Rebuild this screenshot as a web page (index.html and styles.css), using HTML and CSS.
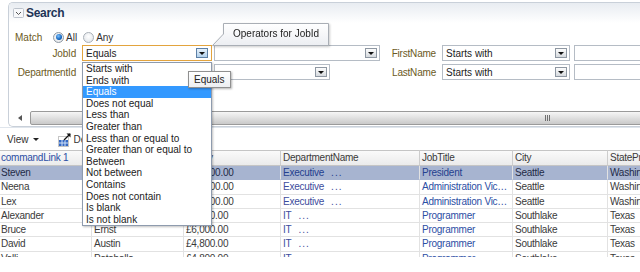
FILE: index.html
```html
<!DOCTYPE html>
<html lang="en">

<head>
    <meta charset="UTF-8">
    <title>Search</title>
    <link rel="stylesheet" href="styles.css">
</head>

<body>
    <div class="page">
        <div class="panel">
            <div class="panel-head">
                <svg class="disclose" width="11" height="10" viewBox="0 0 11 10">
                    <rect x="0.5" y="0.5" width="10" height="9" rx="1" fill="#f7f8fa" stroke="#bcc3cc"/>
                    <path d="M3 4 L5.5 6.5 L8 4" fill="none" stroke="#555" stroke-width="1"/>
                </svg>
                <span class="title">Search</span>
            </div>
            <div class="criteria">
                <div class="match-row">
                    <span class="lbl match-lbl">Match</span>
                    <span class="radio on"></span><span class="opt">All</span>
                    <span class="radio second"></span><span class="opt">Any</span>
                </div>
                <div class="crit-grid">
                    <span class="lbl rlbl">JobId</span>
                    <div class="sel focus w130"><span>Equals</span><i class="btn"></i></div>
                    <div class="sel w166"><span></span><i class="btn"></i></div>
                    <span class="lbl rlbl">FirstName</span>
                    <div class="sel w128"><span>Starts with</span><i class="btn"></i></div>
                    <div class="sel inp"></div>

                    <span class="lbl rlbl">DepartmentId</span>
                    <div class="sel w130"><span>Equals</span><i class="btn"></i></div>
                    <div class="sel w116"><span></span><i class="btn"></i></div>
                    <span class="lbl rlbl">LastName</span>
                    <div class="sel w128"><span>Starts with</span><i class="btn"></i></div>
                    <div class="sel inp"></div>
                </div>
            </div>
            <div class="hscroll">
                <span class="hs-arrow"></span>
                <div class="hs-thumb"><span class="grip"></span></div>
            </div>
        </div>

        <div class="toolbar">
            <span class="view">View</span><span class="caret"></span>
            <svg class="detach" width="15" height="15" viewBox="0 0 15 15">
                <rect x="1.5" y="4.5" width="10" height="10" fill="none" stroke="#8a8a8a" stroke-dasharray="1 1"/>
                <rect x="2" y="8" width="9" height="6" fill="#3569c4"/>
                <path d="M5 8 V14 M8 8 V14 M2 11 H11" stroke="#cfe0f7" stroke-width="1"/>
                <path d="M7 8 L13 2" stroke="#111" stroke-width="1.3"/>
                <path d="M9.5 1.5 H13.5 V5.5 Z" fill="#111"/>
            </svg>
            <span class="tb-text">Detach</span>
        </div>

        <div class="grid-wrap">
            <table class="grid">
                <thead>
                    <tr>
                        <th class="c1 lnk">commandLink 1</th>
                        <th class="c2">LastName</th>
                        <th class="c3">Salary</th>
                        <th class="c4">DepartmentName</th>
                        <th class="c5">JobTitle</th>
                        <th class="c6">City</th>
                        <th class="c7">StateProvince</th>
                    </tr>
                </thead>
                <tbody>
                    <tr class="selected">
                        <td class="c1">Steven</td><td>King</td><td>£24,000.00</td>
                        <td class="dept">Executive<span class="dots">...</span></td>
                        <td class="lnk">President</td><td>Seattle</td><td>Washington</td>
                    </tr>
                    <tr>
                        <td class="c1">Neena</td><td>Kochhar</td><td>£17,000.00</td>
                        <td class="dept">Executive<span class="dots">...</span></td>
                        <td class="lnk">Administration Vice President</td><td>Seattle</td><td>Washington</td>
                    </tr>
                    <tr>
                        <td class="c1">Lex</td><td>De Haan</td><td>£17,000.00</td>
                        <td class="dept">Executive<span class="dots">...</span></td>
                        <td class="lnk">Administration Vice President</td><td>Seattle</td><td>Washington</td>
                    </tr>
                    <tr>
                        <td class="c1">Alexander</td><td>Hunold</td><td>£9,000.00</td>
                        <td class="dept">IT<span class="dots">...</span></td>
                        <td class="lnk">Programmer</td><td>Southlake</td><td>Texas</td>
                    </tr>
                    <tr>
                        <td class="c1">Bruce</td><td>Ernst</td><td>£6,000.00</td>
                        <td class="dept">IT<span class="dots">...</span></td>
                        <td class="lnk">Programmer</td><td>Southlake</td><td>Texas</td>
                    </tr>
                    <tr>
                        <td class="c1">David</td><td>Austin</td><td>£4,800.00</td>
                        <td class="dept">IT<span class="dots">...</span></td>
                        <td class="lnk">Programmer</td><td>Southlake</td><td>Texas</td>
                    </tr>
                    <tr>
                        <td class="c1">Valli</td><td>Pataballa</td><td>£4,800.00</td>
                        <td class="dept">IT<span class="dots">...</span></td>
                        <td class="lnk">Programmer</td><td>Southlake</td><td>Texas</td>
                    </tr>
                </tbody>
            </table>
        </div>

        <!-- operator list, open under JobId -->
        <ul class="ddlist">
            <li>Starts with</li>
            <li>Ends with</li>
            <li class="hl">Equals</li>
            <li>Does not equal</li>
            <li>Less than</li>
            <li>Greater than</li>
            <li>Less than or equal to</li>
            <li>Greater than or equal to</li>
            <li>Between</li>
            <li>Not between</li>
            <li>Contains</li>
            <li>Does not contain</li>
            <li>Is blank</li>
            <li>Is not blank</li>
        </ul>

        <div class="tip-eq">Equals</div>

        <div class="tip-op">
            <svg class="tip-shape" width="120" height="28" viewBox="0 0 120 28">
                <defs>
                    <linearGradient id="tipbg" x1="0" y1="0" x2="0" y2="1">
                        <stop offset="0" stop-color="#ffffff"/>
                        <stop offset="1" stop-color="#eceef2"/>
                    </linearGradient>
                </defs>
                <path d="M12.5 1.5 H117.5 V23.5 H1.5 L12.5 12 Z" fill="url(#tipbg)" stroke="#a9aeb5"/>
            </svg>
            <span class="tip-text">Operators for JobId</span>
        </div>
    </div>
</body>

</html>
```

FILE: styles.css
```css
* {
    margin: 0;
    padding: 0;
    box-sizing: border-box;
}

body {
    font: 10px "Liberation Sans", Arial, sans-serif;
    color: #333;
    background: #fff;
}

.page {
    position: relative;
    width: 640px;
    height: 272px;
    overflow: hidden;
}

/* search panel */
.panel {
    margin: 2px 0 0 8px;
    width: 700px;
    height: 125px;
    border: 1px solid #c9d0d9;
    border-right: none;
    border-radius: 5px 0 0 5px;
    display: flex;
    flex-direction: column;
}

.panel-head {
    height: 20px;
    display: flex;
    align-items: center;
    padding-left: 4px;
    background: linear-gradient(#e8ecf1, #fff);
    border-radius: 4px 0 0 0;
}

.title {
    margin-left: 2px;
    font-size: 12px;
    font-weight: bold;
    letter-spacing: -0.3px;
    color: #1d3456;
}

.criteria {
    padding-top: 8px;
}

.lbl {
    color: #6c5a24;
    white-space: nowrap;
}

.match-row {
    display: flex;
    align-items: center;
    height: 12px;
    padding-left: 6px;
    margin-bottom: 2px;
}

.match-lbl {
    width: 38px;
}

.radio {
    width: 11px;
    height: 11px;
    border-radius: 50%;
    border: 1px solid #8f99a4;
    background: radial-gradient(circle at 50% 40%, #fff, #dde1e6);
    display: flex;
    align-items: center;
    justify-content: center;
}

.radio.on::after {
    content: "";
    width: 6px;
    height: 6px;
    border-radius: 50%;
    background: radial-gradient(circle at 40% 35%, #7cc0ff, #0d5fb8 65%, #08407f);
}

.radio.second {
    margin-left: 6px;
    border-color: #a9b0b8;
}

.opt {
    margin-left: 2px;
    color: #333;
}

.crit-grid {
    display: grid;
    grid-template-columns: 73px 132px 166px 62px 132px 1fr;
    grid-auto-rows: 16px;
    row-gap: 3px;
    align-items: center;
}

.rlbl {
    text-align: right;
    padding-right: 6px;
    letter-spacing: -0.2px;
}

.sel {
    height: 16px;
    display: flex;
    align-items: center;
    justify-content: space-between;
    padding-left: 3px;
    border: 1px solid #b5bcc5;
    background: #fff;
    color: #222;
}

.sel.focus {
    border-color: #e3a43e;
}

.w130 { width: 130px; }
.w166 { width: 166px; }
.w116 { width: 116px; }
.w128 { width: 128px; }
.inp { width: 100%; }

.btn {
    width: 12px;
    height: 10px;
    margin-right: 2px;
    border: 1px solid #8e97a2;
    background: linear-gradient(#fdfdfd, #d6dade);
    display: flex;
    align-items: center;
    justify-content: center;
}

.focus .btn {
    margin-right: 3px;
    border-color: #5d80a6;
    background: linear-gradient(#e6f1fb, #b3d1ec);
}

.btn::after {
    content: "";
    border-top: 3px solid #111;
    border-left: 3px solid transparent;
    border-right: 3px solid transparent;
}

.hscroll {
    margin-top: auto;
    margin-bottom: 1px;
    height: 14px;
    display: flex;
}

.hs-arrow {
    width: 21px;
    display: flex;
    align-items: center;
    justify-content: center;
}

.hs-arrow::after {
    content: "";
    border-right: 4px solid #555;
    border-top: 3px solid transparent;
    border-bottom: 3px solid transparent;
}

.hs-thumb {
    flex: 1;
    display: flex;
    align-items: center;
    padding-left: 514px;
    border: 1px solid #9a9a9a;
    border-radius: 2px;
    background: linear-gradient(#f6f6f6, #e2e2e2 45%, #c9c9c9);
}

.grip {
    width: 5px;
    height: 6px;
    background: repeating-linear-gradient(90deg, #6f6f6f 0 1px, transparent 1px 2px);
}

/* toolbar */
.toolbar {
    height: 23px;
    border-top: 1px solid #dfe5ec;
    display: flex;
    align-items: center;
    padding-left: 7px;
}

.view {
    color: #333;
}

.caret {
    margin-left: 4px;
    border-top: 3px solid #222;
    border-left: 3px solid transparent;
    border-right: 3px solid transparent;
}

.detach {
    margin-left: 18px;
}

.tb-text {
    margin-left: 2px;
}

/* table */
.grid-wrap {
    height: 107px;
    overflow: hidden;
}

.grid {
    width: 708px;
    table-layout: fixed;
    border-collapse: separate;
    border-spacing: 0;
    letter-spacing: -0.25px;
}

.grid th,
.grid td {
    padding: 0 2px;
    white-space: nowrap;
    overflow: hidden;
    text-overflow: ellipsis;
    text-align: left;
    font-weight: normal;
}

.grid th {
    line-height: 14px;
    border-top: 1px solid #c5c5c5;
    border-bottom: 1px solid #c5c5c5;
    border-right: 1px solid #cdcdcd;
    background: linear-gradient(#fafafa, #ebebeb);
    color: #3a3a3a;
}

.grid td {
    line-height: 13.3px;
    border-bottom: 1px solid #e2e2e2;
    border-right: 1px solid #e2e2e2;
    color: #3a3a3a;
}

.grid .c1 { padding-left: 1px; }

th.c1 { width: 92px; }
th.c2 { width: 92px; }
th.c3 { width: 97px; }
th.c4 { width: 139px; }
th.c5 { width: 93px; }
th.c6 { width: 95px; }
th.c7 { width: 100px; }

.grid .lnk {
    color: #2b4ea4;
}

.grid .dept {
    color: #3d4c9c;
}

.dots {
    margin-left: 7px;
    letter-spacing: 1px;
}

.grid .selected td {
    background: #a7b4d0;
    border-bottom-color: #a7b4d0;
    color: #1f2b47;
}

.grid .selected .lnk,
.grid .selected .dept {
    color: #24408e;
}

/* overlays */
.ddlist {
    position: absolute;
    left: 82px;
    top: 62px;
    width: 130px;
    border: 1px solid #8e9bae;
    background: #fff;
    box-shadow: 1px 1px 2px rgba(0, 0, 0, 0.25);
}

.ddlist li {
    list-style: none;
    height: 11.6px;
    line-height: 11.6px;
    padding-left: 3px;
    color: #222;
    white-space: nowrap;
}

.ddlist .hl {
    background: #3399ff;
    color: #fff;
}

.tip-eq {
    position: absolute;
    left: 188px;
    top: 71px;
    width: 43px;
    height: 17px;
    padding-left: 5px;
    line-height: 15px;
    border: 1px solid #909090;
    background: linear-gradient(#fff, #eceef1);
    box-shadow: 1px 1px 2px rgba(0, 0, 0, 0.3);
    color: #222;
}

.tip-op {
    position: absolute;
    left: 211px;
    top: 22px;
    width: 120px;
    height: 28px;
    filter: drop-shadow(1px 1px 1px rgba(0, 0, 0, 0.2));
}

.tip-shape {
    position: absolute;
    left: 0;
    top: 0;
}

.tip-text {
    position: relative;
    display: block;
    padding: 6px 0 0 22px;
    line-height: 12px;
    color: #222;
}
```
